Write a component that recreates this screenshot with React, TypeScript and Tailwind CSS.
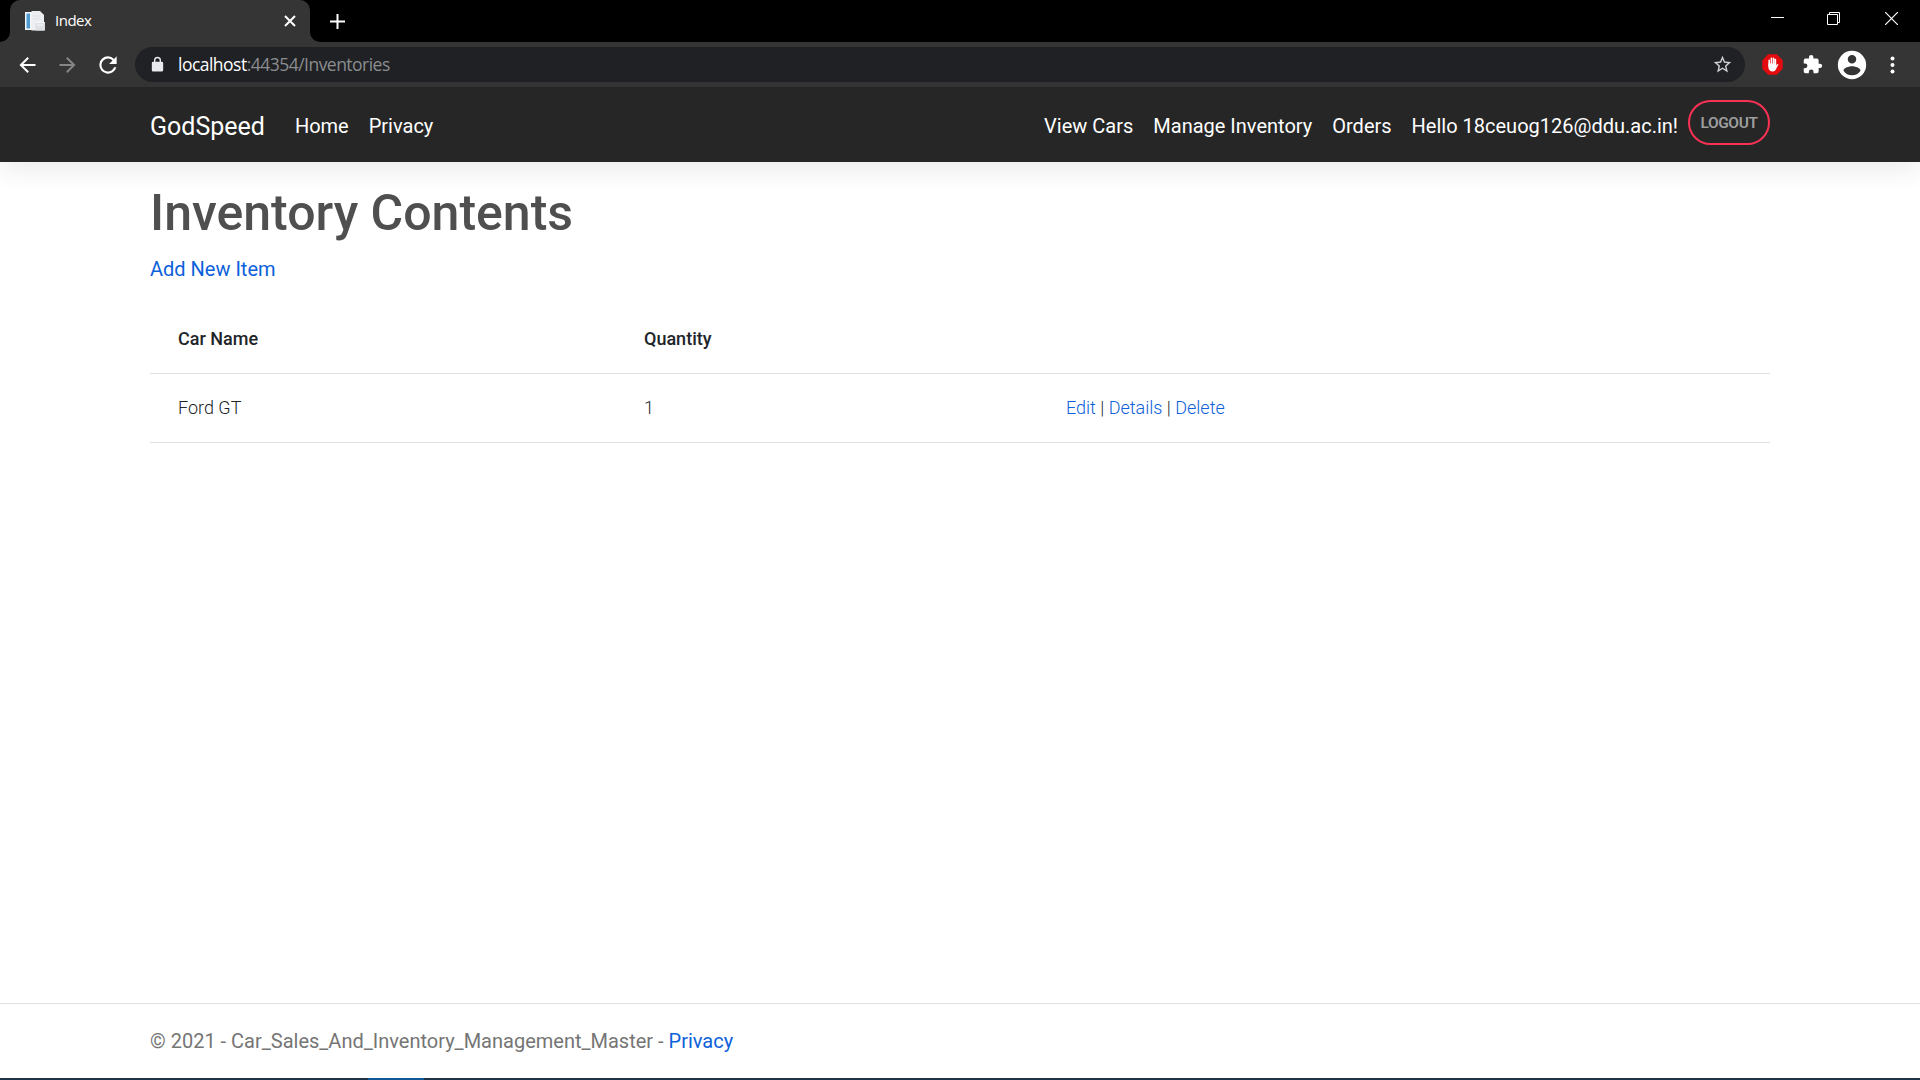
import React from "react";

const roboto = "font-[Roboto,sans-serif]";

function FolderIcon() {
  return (
    <svg width="20" height="20" viewBox="0 0 20 20" className="shrink-0">
      <path d="M0 1h7v18H0z" fill="#f4f6f8" />
      <path d="M1.500 2.500h3.500v15H1.500z" fill="#4e9bd0" />
      <path d="M6.500 0h8.500l4 4v15.500H6.500z" fill="#eceef1" />
      <path d="M8 5h8M8 8h8" stroke="#dcdfe5" />
      <path d="M10.500 11h9.500v8.500h-9.500z" fill="#dde0e5" />
      <path d="M10.500 11.500h9M12 14h6" stroke="#f8f9fa" />
    </svg>
  );
}

function TabStrip() {
  return (
    <div className="flex h-[42px] justify-between bg-black">
      <div className="flex">
        <div className="flex w-[10px] items-end bg-[#353535]">
          <div className="h-full w-full rounded-br-[10px] bg-black" />
        </div>
        <div className="w-[300px] bg-black">
          <div className="flex h-full items-center rounded-t-[10px] bg-[#353535] pl-[15px] pr-[14px] text-white">
            <FolderIcon />
            <span className="mb-[2px] ml-[10px] flex-1 font-['Open_Sans','Noto_Sans',sans-serif] text-[15px] leading-5 tracking-[-0.5px]">Index</span>
            <svg width="12" height="12" viewBox="0 0 12 12" stroke="#fff" strokeWidth="2">
              <path d="M1 1l10 10M11 1L1 11" />
            </svg>
          </div>
        </div>
        <div className="flex w-[10px] items-end bg-[#353535]">
          <div className="h-full w-full rounded-bl-[10px] bg-black" />
        </div>
        <div className="ml-[10px] flex items-center">
          <svg width="15" height="15" viewBox="0 0 15 15" stroke="#fff" strokeWidth="2">
            <path d="M7.500 0v15M0 7.500h15" />
          </svg>
        </div>
      </div>
      <div className="flex pr-[22px] pt-3">
        <svg width="13" height="13" viewBox="0 0 13 13" stroke="#fff">
          <path d="M0 5.500h13" />
        </svg>
        <svg className="ml-[43px]" width="13" height="13" viewBox="0 0 13 13" stroke="#fff" fill="none">
          <path d="M.5 2.500h10v10H.5zM2.500 2.500v-2h10v10h-2" />
        </svg>
        <svg className="ml-[45px]" width="13" height="13" viewBox="0 0 13 13" stroke="#fff" strokeWidth="1.2">
          <path d="M0 0l13 13M13 0L0 13" />
        </svg>
      </div>
    </div>
  );
}

function Toolbar() {
  return (
    <div className="flex h-[45px] items-center bg-[#353535] pl-[15px]">
      <svg width="25" height="24" viewBox="0 0 24 24" fill="#fff">
        <path d="M20 11H7.830l5.590-5.590L12 4l-8 8 8 8 1.410-1.410L7.830 13H20v-2z" />
      </svg>
      <svg className="ml-[15px]" width="25" height="24" viewBox="0 0 24 24" fill="#868686">
        <path d="M12 4l-1.410 1.410L16.170 11H4v2h12.170l-5.580 5.590L12 20l8-8z" />
      </svg>
      <svg className="ml-[15px]" width="26" height="26" viewBox="0 0 24 24" fill="#fff">
        <path d="M17.650 6.350A7.960 7.960 0 0 0 12 4a8 8 0 1 0 7.730 10h-2.080A6 6 0 1 1 12 6c1.660 0 3.140.69 4.220 1.780L13 11h7V4l-2.350 2.350z" />
      </svg>
      <div className="ml-[14px] flex h-[35px] w-[1610px] items-center rounded-full bg-[#202124] pl-[14px] pr-3">
        <svg width="17" height="17" viewBox="0 0 24 24" fill="#e8eaed">
          <path d="M18 8h-1V6A5 5 0 0 0 7 6v2H6a2 2 0 0 0-2 2v10c0 1.100.9 2 2 2h12a2 2 0 0 0 2-2V10a2 2 0 0 0-2-2zM9 6a3 3 0 0 1 6 0v2H9V6z" />
        </svg>
        <span className="mb-[2px] ml-[12px] flex-1 font-['Open_Sans','Noto_Sans',sans-serif] text-[17.5px] leading-6 tracking-[-0.52px] text-[#8b8d90]">
          <span className="text-white">localhost</span>:44354/Inventories
        </span>
        <svg width="21" height="21" viewBox="0 0 24 24" fill="#d0d1d3">
          <path d="M22 9.240l-7.190-.62L12 2 9.190 8.630 2 9.240l5.460 4.730L5.820 21 12 17.270 18.180 21l-1.630-7.030L22 9.240zM12 15.400l-3.760 2.270 1-4.280-3.320-2.880 4.380-.38L12 6.100l1.710 4.040 4.380.38-3.320 2.880 1 4.280L12 15.400z" />
        </svg>
      </div>
      <svg className="ml-[17px]" width="21" height="21" viewBox="0 0 21 21">
        <path d="M6.200.3h8.600l5.900 5.900v8.600l-5.900 5.900H6.200L.3 14.800V6.200z" fill="#e30b0d" />
        <path d="M7.200 12V6.400M9.400 10V4.400M11.600 10V4.200M13.400 11V5.600" stroke="#fff" strokeWidth="1.600" strokeLinecap="round" />
        <path d="M6.400 9.500h7.800v2l1.200-1.300c.6-.4 1.200 0 .9.600l-2.200 4.100c-.7 1.500-1.600 2.500-3.200 2.500-3 0-4.500-1.700-4.500-4.200z" fill="#fff" />
      </svg>
      <svg className="ml-[19px]" width="21" height="21" viewBox="0 0 24 24" fill="#fff">
        <path d="M20.500 11H19V7a2 2 0 0 0-2-2h-4V3.500a2.500 2.500 0 0 0-5 0V5H4a2 2 0 0 0-2 2v3.800h1.500a2.700 2.700 0 0 1 0 5.400H2V20c0 1.100.9 2 2 2h3.800v-1.500a2.700 2.700 0 0 1 5.400 0V22H17a2 2 0 0 0 2-2v-4h1.500a2.500 2.500 0 0 0 0-5z" />
      </svg>
      <svg className="ml-[12px]" width="34" height="34" viewBox="0 0 24 24" fill="#fff">
        <path d="M12 2a10 10 0 1 0 0 20 10 10 0 0 0 0-20zm0 3a3 3 0 1 1 0 6 3 3 0 0 1 0-6zm0 14.200a7.200 7.200 0 0 1-6-3.220c.03-1.990 4-3.080 6-3.080s5.970 1.090 6 3.080a7.200 7.200 0 0 1-6 3.220z" />
      </svg>
      <svg className="ml-[20px]" width="6" height="18" viewBox="0 0 6 18" fill="#fff">
        <circle cx="3.500" cy="2.500" r="2" />
        <circle cx="3.500" cy="9" r="2" />
        <circle cx="3.500" cy="15.500" r="2" />
      </svg>
    </div>
  );
}

function SiteNav() {
  return (
    <nav className="relative flex h-[75px] shrink-0 items-center bg-[#262626] px-[150px] pt-[2px] text-[20px] leading-[30px] text-white shadow-[0_10px_25px_0_rgba(0,0,0,0.07)]">
      <a className="pt-[2px] text-[25px]">GodSpeed</a>
      <a className="ml-[30px]">Home</a>
      <a className="ml-5">Privacy</a>
      <div className="ml-auto flex items-center gap-5">
        <a>View Cars</a>
        <a>Manage Inventory</a>
        <a>Orders</a>
        <a>Hello 18ceuog126@ddu.ac.in!</a>
      </div>
      <button className="mb-[7px] ml-[10px] h-[45px] w-[82px] rounded-full border-2 border-[#f93154] pt-[3px] text-[15.5px] font-semibold leading-[23px] tracking-[-0.4px] text-[#9e9e9e]">
        LOGOUT
      </button>
    </nav>
  );
}

export default function App() {
  return (
    <div className={`${roboto} flex h-[1080px] w-[1920px] flex-col overflow-hidden bg-white text-[#4f4f4f]`}>
      <TabStrip />
      <Toolbar />
      <SiteNav />
      <main className="flex-1 px-[150px] pt-[21px]">
        <h1 className="text-[50px] font-medium leading-[60px]">Inventory Contents</h1>
        <p className="mt-[11px] text-[20px] leading-[30px] text-[#0d61da]">
          <a>Add New Item</a>
        </p>
        <table className="mt-[20px] w-full table-fixed text-left text-[18px] leading-[28px] text-[#212529]">
          <colgroup>
            <col className="w-[466px]" />
            <col className="w-[422px]" />
            <col />
          </colgroup>
          <thead>
            <tr className="h-[69px] border-b border-[#e0e0e0]">
              <th className="px-7 pt-[2px] font-medium">Car Name</th>
              <th className="px-7 pt-[2px] font-medium">Quantity</th>
              <th />
            </tr>
          </thead>
          <tbody>
            <tr className="h-[69px] border-b border-[#e0e0e0] font-light">
              <td className="px-7">Ford GT</td>
              <td className="px-7">1</td>
              <td className="px-7">
                <a className="text-[#0d61da]">Edit</a> | <a className="text-[#0d61da]">Details</a> |{" "}
                <a className="text-[#0d61da]">Delete</a>
              </td>
            </tr>
          </tbody>
        </table>
      </main>
      <footer className="h-[75px] border-t border-[#dee2e6] px-[150px] text-[20px] leading-[75px] text-[#757575]">
        © 2021 - Car_Sales_And_Inventory_Management_Master - <a className="text-[#0d61da]">Privacy</a>
      </footer>
      <div className="flex h-[2px] bg-[#1c3348]">
        <div className="ml-[368px] w-[56px] bg-[#0f5a96]" />
      </div>
    </div>
  );
}
